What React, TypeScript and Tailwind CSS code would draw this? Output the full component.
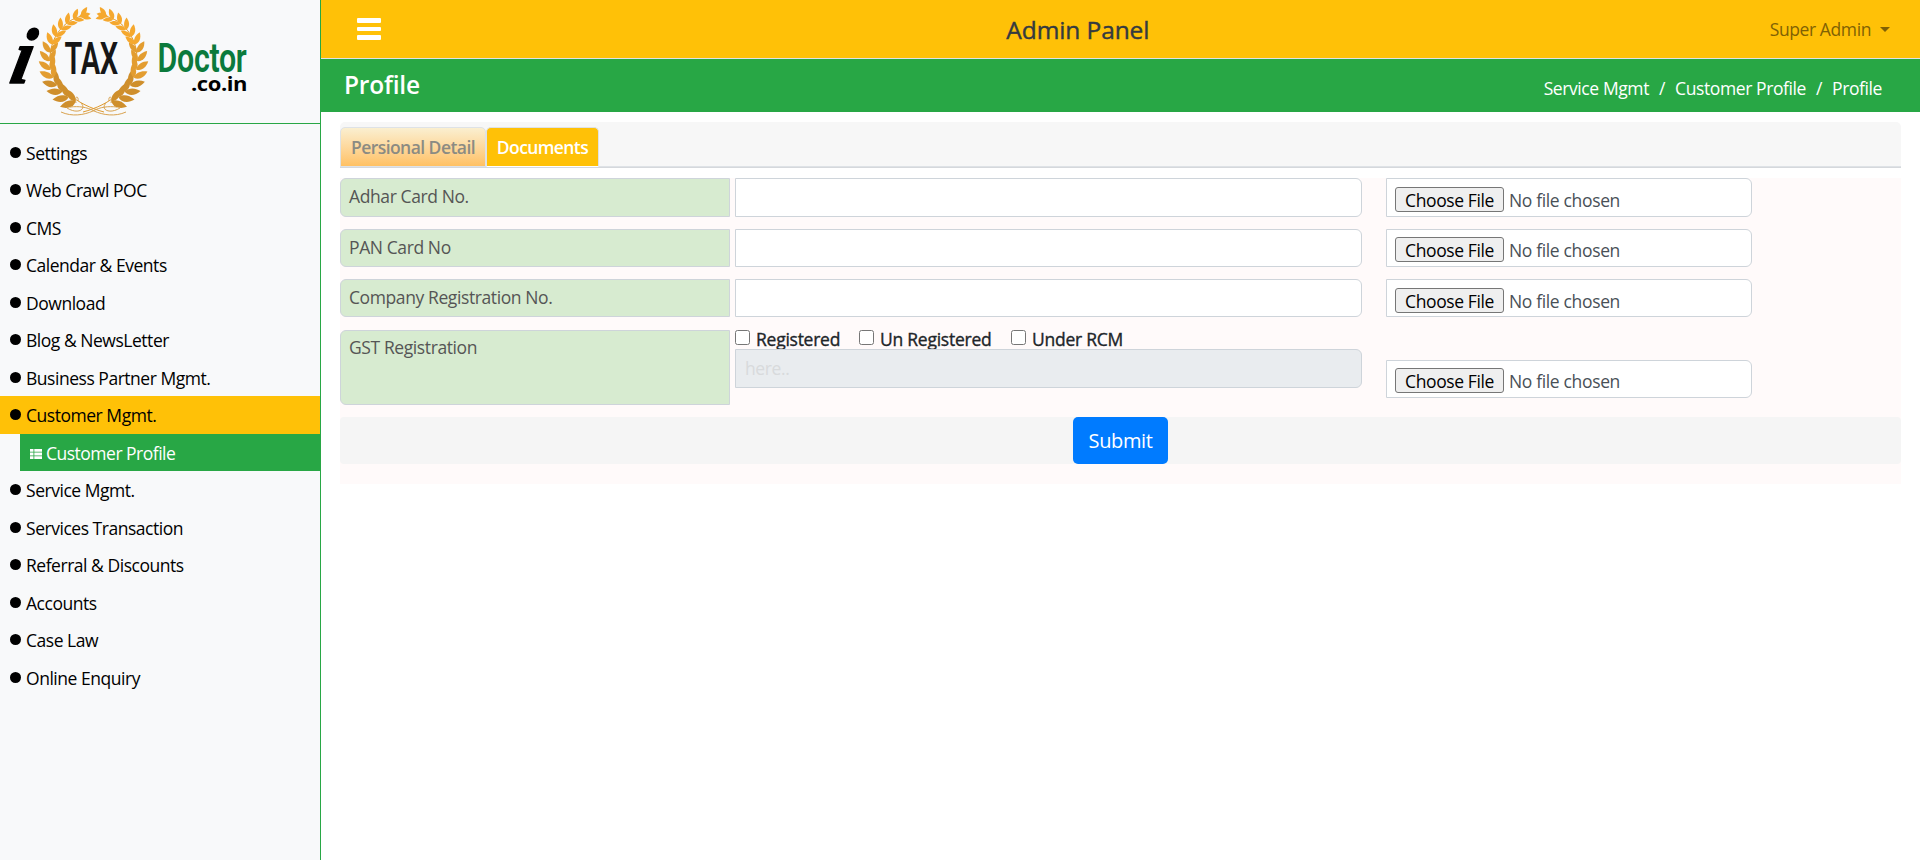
import React from "react";

type Leaf = { x: number; y: number; angle: number; size: number; color: string };

function buildLeaves(): Leaf[] {
  const leaves: Leaf[] = [];
  const count = 14;
  for (let i = 0; i < count; i++) {
    const t = i / (count - 1);
    const deg = 114 + t * 140;
    const a = (deg * Math.PI) / 180;
    const x = 93.5 + 43.5 * Math.cos(a);
    const y = 60 + 45 * Math.sin(a);
    const size = 1.2 - 0.4 * t;
    const heading = deg + 90;
    const color = t < 0.3 ? "#cf8f2c" : t < 0.6 ? "#e39d30" : "#f5a82e";
    leaves.push({ x, y, angle: heading - 42, size, color });
    leaves.push({ x, y, angle: heading + 30, size: size * 0.9, color });
  }
  leaves.push({ x: 79, y: 17, angle: -14, size: 0.85, color: "#f5a82e" });
  return leaves;
}

const LEAVES = buildLeaves();

function Branch() {
  return (
    <g>
      <path
        d="M104 112C78 105 53 88 50 59C50 37 64 20 82 16"
        fill="none"
        stroke="#e09a2d"
        strokeWidth="1"
      />
      {LEAVES.map((l, i) => (
        <path
          key={i}
          d="M0 0C3 -4.500 9 -4.500 14 -0.500C9 3 4 3 0 0Z"
          fill={l.color}
          transform={`translate(${l.x} ${l.y}) rotate(${l.angle}) scale(${l.size})`}
        />
      ))}
      <path
        d="M61 112C72 117 84 115 93 111C100 107 108 106 117 107M67 108C78 115 88 109 80 102M76 103C74 96 79 95 78 101"
        fill="none"
        stroke="#d9a350"
        strokeWidth="1"
      />
    </g>
  );
}

function Logo() {
  return (
    <svg width="260" height="122" viewBox="0 0 260 122">
      <Branch />
      <g transform="translate(187 0) scale(-1 1)">
        <Branch />
      </g>
      <text
        transform="translate(8 83) skewX(-12)"
        fontFamily="Liberation Serif"
        fontWeight="700"
        fontStyle="italic"
        fontSize="79"
        stroke="#000"
        strokeWidth="1.500"
        strokeLinejoin="round"
        textLength="20"
        lengthAdjust="spacingAndGlyphs"
      >
        i
      </text>
      <text x="64.500" y="73.500" fontFamily="Roboto" fontWeight="600" fontSize="45" fill="#161616" textLength="53.500" lengthAdjust="spacingAndGlyphs">
        TAX
      </text>
      <text x="157.500" y="72" fontFamily="Roboto" fontWeight="600" fontSize="41.500" fill="#0b7a3c" textLength="89" lengthAdjust="spacingAndGlyphs">
        Doctor
      </text>
      <text x="191" y="91" fontFamily="Open Sans" fontWeight="700" fontSize="20" fill="#000" textLength="56" lengthAdjust="spacingAndGlyphs">
        .co.in
      </text>
    </svg>
  );
}

const MENU = [
  "Settings",
  "Web Crawl POC",
  "CMS",
  "Calendar & Events",
  "Download",
  "Blog & NewsLetter",
  "Business Partner Mgmt.",
  "Customer Mgmt.",
  "Service Mgmt.",
  "Services Transaction",
  "Referral & Discounts",
  "Accounts",
  "Case Law",
  "Online Enquiry",
];

function Sidebar() {
  return (
    <aside className="flex w-[321px] shrink-0 flex-col border-r border-[#28a745] bg-[#f8f9fa]">
      <div className="h-[124px] border-b border-[#28a745]">
        <Logo />
      </div>
      <nav className="flex flex-col pt-[9.500px] tracking-[-0.47px] text-black">
        {MENU.map((item) => (
          <React.Fragment key={item}>
            <a className={`flex h-[37.500px] items-center pl-[10px] ${item === "Customer Mgmt." ? "bg-[#ffc107]" : ""}`}>
              <span className="mr-[5px] h-[11px] w-[11px] rounded-full bg-black" />
              <span className="pt-[1.500px]">{item}</span>
            </a>
            {item === "Customer Mgmt." && (
              <a className="ml-5 flex h-[37.500px] items-center bg-[#28a745] pl-[10px] tracking-[-0.5px] text-white">
                <svg className="mt-1 mr-1 h-[10px] w-[12px]" viewBox="0 0 12 10" fill="currentColor">
                  <path d="M0 0h3.500v2.800H0zM4.300 0H12v2.800H4.300zM0 3.600h3.500v2.800H0zM4.300 3.600H12v2.800H4.300zM0 7.200h3.500V10H0zM4.300 7.200H12V10H4.300z" />
                </svg>
                <span className="pt-[1.500px]">Customer Profile</span>
              </a>
            )}
          </React.Fragment>
        ))}
      </nav>
    </aside>
  );
}

function FileField() {
  return (
    <div className="flex h-[38.300px] w-[366px] items-start rounded-r-[6px] border border-[#ced4da] bg-white pt-[7.600px] pl-2 text-[#495057]">
      <button className="h-[25px] w-[109px] rounded-[3px] border border-[#767676] bg-[#efefef] leading-[25px] tracking-[-0.4px] whitespace-nowrap text-black">
        Choose File
      </button>
      <span className="ml-[5px] leading-[26px] tracking-[-0.35px]">No file chosen</span>
    </div>
  );
}

function Row({ label }: { label: string }) {
  return (
    <div className="mb-[12.100px] flex h-[38.300px]">
      <label className="w-[390px] rounded-l-[6px] border border-[#ced4da] bg-[#d7ebd0] pl-[8px] leading-[34px] text-[#555]">{label}</label>
      <input className="ml-[5px] w-[627px] rounded-r-[6px] border border-[#ced4da] bg-white px-[9px]" />
      <div className="ml-6">
        <FileField />
      </div>
    </div>
  );
}

const GST_OPTIONS = [
  { label: "Registered", style: "w-[124px]" },
  { label: "Un Registered", style: "w-[152px]" },
  { label: "Under RCM", style: "w-[130px]" },
];

export default function App() {
  return (
    <div className="flex h-[860px] w-[1920px] overflow-hidden bg-white font-['Open_Sans',sans-serif] text-[17.500px] leading-[27px] font-normal tracking-[-0.400px]">
      <Sidebar />
      <main className="flex flex-1 flex-col">
        <header className="flex h-[59px] items-center justify-between border-b border-[#dee2e6] bg-[#ffc107] pr-[30px] pl-9">
          <div className="flex w-[180px] flex-col gap-1">
            <span className="h-[4.500px] w-6 rounded-[1px] bg-white" />
            <span className="h-[4.500px] w-6 rounded-[1px] bg-white" />
            <span className="h-[4.500px] w-6 rounded-[1px] bg-white" />
          </div>
          <h1 className="mr-[151px] flex-1 text-center text-[24.500px] tracking-[-0.1px] text-[#343a40] [-webkit-text-stroke:0.4px]">Admin Panel</h1>
          <div className="flex items-center text-[#806104]">
            <span>Super Admin</span>
            <span className="ml-[9px] border-x-[5.500px] border-t-[5.500px] border-x-transparent border-t-[#806104]" />
          </div>
        </header>
        <div className="flex h-[53px] items-center justify-between bg-[#28a745] pr-[38px] pl-[23px] text-white">
          <h2 className="-mt-[2px] text-[24.500px] font-semibold tracking-[-0.2px]">Profile</h2>
          <div className="mt-[6px] flex gap-[10px]">
            <span>Service Mgmt</span>
            <span>/</span>
            <span>Customer Profile</span>
            <span>/</span>
            <span>Profile</span>
          </div>
        </div>
        <section className="mt-[10px] mr-[19px] ml-[19px]">
          <div className="flex h-[46px] items-end rounded-t-[5px] border-b border-[#d5d8dc] bg-[#f7f7f7]">
            <div className="flex h-[40px] w-full items-end border-b border-[#dee2e6] font-semibold tracking-[-0.55px]">
              <div className="-mb-px h-[40px] w-[146px] rounded-t-[5px] border border-[#dee2e6] bg-linear-to-b from-[#faefd0] to-[#ffc163] text-center leading-[39px] whitespace-nowrap text-[#8b8b83]">
                Persional Detail
              </div>
              <div className="-mb-px h-[40px] w-[113px] rounded-t-[5px] border border-[#dee2e6] border-b-white bg-[#ffc107] text-center leading-[39px] tracking-[-0.6px] whitespace-nowrap text-white">
                Documents
              </div>
            </div>
          </div>
          <form className="mt-[10.400px] h-[305.600px] bg-[#fffafa]">
            <Row label="Adhar Card No." />
            <Row label="PAN Card No" />
            <Row label="Company Registration No." />
            <div className="mb-[12.400px] flex h-[75px]">
              <label className="w-[390px] rounded-l-[6px] border border-[#ced4da] bg-[#d7ebd0] pl-[8px] leading-[33px] text-[#555]">GST Registration</label>
              <div className="ml-[5px] w-[627px]">
                <div className="flex h-[19px] tracking-[-0.25px] text-[#212529] [-webkit-text-stroke:0.35px]">
                  {GST_OPTIONS.map((o) => (
                    <label key={o.label} className={`flex items-start leading-[19px] whitespace-nowrap ${o.style}`}>
                      <input type="checkbox" className="mr-[6px] h-[15px] w-[15px]" />
                      <span>{o.label}</span>
                    </label>
                  ))}
                </div>
                <input
                  disabled
                  placeholder="here.."
                  className="h-[39px] w-full rounded-r-[6px] border border-[#ced4da] bg-[#e9ecef] px-[9px] placeholder:text-[#d8dadc]"
                />
              </div>
              <div className="ml-6 pt-[30px]">
                <FileField />
              </div>
            </div>
            <div className="flex h-[47px] rounded-[4px] bg-[#f5f5f5] pl-[733px]">
              <button className="h-[47px] w-[95px] rounded-[5px] bg-[#007bff] text-[20px] tracking-[-0.4px] text-white">Submit</button>
            </div>
          </form>
        </section>
      </main>
    </div>
  );
}
